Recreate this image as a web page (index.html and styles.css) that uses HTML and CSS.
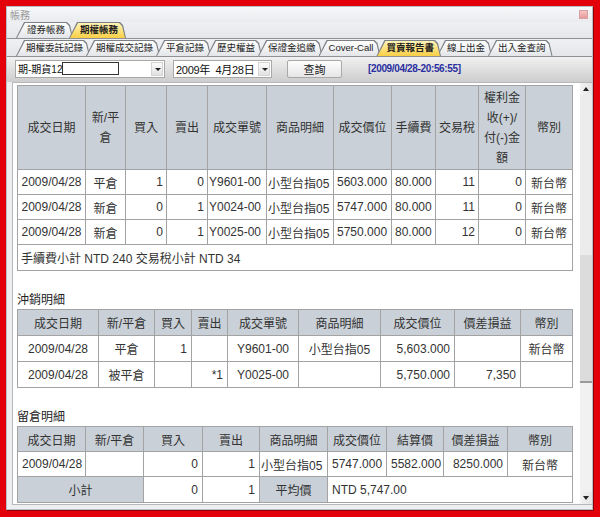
FILE: index.html
```html
<!DOCTYPE html>
<html>
<head>
<meta charset="utf-8">
<link rel="stylesheet" href="styles.css">
</head>
<body>
<div class="window">
  <div class="titlebar">
    <span class="title">帳務</span>
    <span class="close"></span>
  </div>
  <div class="tabs tabs1">
    <span class="tab">證券帳務</span>
    <span class="tab active">期權帳務</span>
  </div>
  <div class="tabs tabs2">
    <span class="tab">期權委託記錄</span>
    <span class="tab">期權成交記錄</span>
    <span class="tab">平倉記錄</span>
    <span class="tab">歷史權益</span>
    <span class="tab">保證金追繳</span>
    <span class="tab">Cover-Call</span>
    <span class="tab active">買賣報告書</span>
    <span class="tab">線上出金</span>
    <span class="tab">出入金查詢</span>
  </div>
  <div class="controls">
    <div class="select sel-acct">
      <span class="sel-text">期-期貨12</span>
      <span class="blank"></span>
      <span class="arrow"></span>
    </div>
    <div class="select sel-date">
      <span class="sel-text">2009年&nbsp;&nbsp;4月28日</span>
      <span class="arrow"></span>
    </div>
    <button class="btn">查詢</button>
    <span class="stamp">[2009/04/28-20:56:55]</span>
  </div>
  <div class="content">
    <div class="pane">
      <table class="t t1">
        <colgroup>
          <col style="width:68px"><col style="width:40px"><col style="width:41px"><col style="width:41px"><col style="width:59px"><col style="width:67px"><col style="width:58px"><col style="width:44px"><col style="width:43px"><col style="width:47px"><col style="width:47px">
        </colgroup>
        <tr class="head">
          <th>成交日期</th><th>新/平<br>倉</th><th>買入</th><th>賣出</th><th>成交單號</th><th>商品明細</th><th>成交價位</th><th>手續費</th><th>交易稅</th><th>權利金<br>收(+)/<br>付(-)金<br>額</th><th>幣別</th>
        </tr>
        <tr>
          <td class="c">2009/04/28</td><td class="c">平倉</td><td class="r">1</td><td class="r">0</td><td class="n">Y9601-00</td><td class="n">小型台指05</td><td>5603.000</td><td>80.000</td><td class="r">11</td><td class="r">0</td><td class="c">新台幣</td>
        </tr>
        <tr>
          <td class="c">2009/04/28</td><td class="c">新倉</td><td class="r">0</td><td class="r">1</td><td class="n">Y0024-00</td><td class="n">小型台指05</td><td>5747.000</td><td>80.000</td><td class="r">11</td><td class="r">0</td><td class="c">新台幣</td>
        </tr>
        <tr>
          <td class="c">2009/04/28</td><td class="c">新倉</td><td class="r">0</td><td class="r">1</td><td class="n">Y0025-00</td><td class="n">小型台指05</td><td>5750.000</td><td>80.000</td><td class="r">12</td><td class="r">0</td><td class="c">新台幣</td>
        </tr>
        <tr class="sum">
          <td colspan="11">手續費小計 NTD 240 交易稅小計 NTD 34</td>
        </tr>
      </table>

      <div class="section">沖銷明細</div>
      <table class="t t2">
        <colgroup>
          <col style="width:81px"><col style="width:56px"><col style="width:37px"><col style="width:36px"><col style="width:71px"><col style="width:82px"><col style="width:74px"><col style="width:66px"><col style="width:52px">
        </colgroup>
        <tr class="head">
          <th>成交日期</th><th>新/平倉</th><th>買入</th><th>賣出</th><th>成交單號</th><th>商品明細</th><th>成交價位</th><th>價差損益</th><th>幣別</th>
        </tr>
        <tr>
          <td class="c">2009/04/28</td><td class="c">平倉</td><td class="r">1</td><td></td><td class="c">Y9601-00</td><td class="c">小型台指05</td><td class="r">5,603.000</td><td></td><td class="c">新台幣</td>
        </tr>
        <tr>
          <td class="c">2009/04/28</td><td class="c">被平倉</td><td></td><td class="r">*1</td><td class="c">Y0025-00</td><td></td><td class="r">5,750.000</td><td class="r">7,350</td><td></td>
        </tr>
      </table>

      <div class="section">留倉明細</div>
      <table class="t t3">
        <colgroup>
          <col style="width:68px"><col style="width:58px"><col style="width:59px"><col style="width:57px"><col style="width:68px"><col style="width:59px"><col style="width:57px"><col style="width:64px"><col style="width:65px">
        </colgroup>
        <tr class="head">
          <th>成交日期</th><th>新/平倉</th><th>買入</th><th>賣出</th><th>商品明細</th><th>成交價位</th><th>結算價</th><th>價差損益</th><th>幣別</th>
        </tr>
        <tr>
          <td>2009/04/28</td><td></td><td class="r">0</td><td class="r">1</td><td class="n">小型台指05</td><td>5747.000</td><td>5582.000</td><td class="r">8250.000</td><td class="c">新台幣</td>
        </tr>
        <tr>
          <th colspan="2">小計</th><td class="r">0</td><td class="r">1</td><th>平均價</th><td colspan="4">NTD 5,747.00</td>
        </tr>
      </table>
    </div>
    <div class="scrollbar">
      <span class="sb-btn sb-up"></span>
      <span class="sb-track sb-top"></span>
      <span class="sb-thumb"></span>
      <span class="sb-track sb-bottom"></span>
      <span class="sb-btn sb-down"></span>
    </div>
  </div>
</div>
</body>
</html>
```

FILE: styles.css
```css
* { box-sizing: border-box; }

html, body {
  margin: 0;
  height: 100%;
}

body {
  background: #e3000b;
  padding: 6px 7px 7px 6px;
  font-family: "Liberation Sans", "Noto Sans CJK TC", sans-serif;
  color: #333;
}

.window {
  height: 504px;
  background: #eceef0;
  border: 1px solid #b9bcc2;
  display: flex;
  flex-direction: column;
  box-shadow: 1px 1px 0 #8a0006;
}

.titlebar {
  height: 15px;
  display: flex;
  align-items: center;
  justify-content: space-between;
  padding: 0 3px 0 3px;
  background: linear-gradient(#f7f8fa, #e9ebee);
}

.title {
  font-size: 10px;
  color: #9a9a9a;
}

.close {
  width: 9px;
  height: 9px;
  background: linear-gradient(#f6c4c4, #e79a9a);
  border: 1px solid #d8a0a0;
  margin-right: 1px;
}

.tabs {
  display: flex;
  align-items: flex-end;
  height: 17px;
  border-bottom: 1px solid #8e9196;
  background: linear-gradient(#eef0f3, #e4e6ea);
}

.tabs1 { padding-left: 9px; }
.tabs2 { padding-left: 9px; margin-top: 1px; }

.tab {
  position: relative;
  z-index: 0;
  height: 16px;
  line-height: 16px;
  font-size: 9.5px;
  color: #222;
  padding: 0 7px 0 10px;
  margin-right: -4px;
  white-space: nowrap;
}

.tab::before,
.tab::after {
  content: "";
  position: absolute;
  z-index: -1;
  clip-path: polygon(0 100%, 8px 0, calc(100% - 6px) 0, calc(100% - 3px) 3px, 100% 100%);
}

.tab::before {
  inset: 0;
  background: #7d8084;
}

.tab::after {
  inset: 1px 1px 0 1px;
  background: linear-gradient(#ffffff, #e3e5e8);
}

.tab.active {
  font-weight: bold;
  z-index: 1;
}

.tab.active::after {
  background: linear-gradient(#fff4b8, #f9cf45);
}

.tabs1 .tab { padding: 0 8px 0 11px; }

.controls {
  height: 25px;
  display: flex;
  align-items: center;
  padding: 0 0 2px 8px;
  background: linear-gradient(#f1f1f1, #cdcdcd);
}

.select {
  height: 18px;
  display: flex;
  align-items: center;
  background: #fff;
  border: 1px solid #a8a8a8;
  font-size: 11px;
  color: #111;
}

.sel-acct { width: 150px; font-size: 10px; }
.sel-date { width: 99px; margin-left: 8px; }

.sel-text {
  padding-left: 2px;
  white-space: nowrap;
}

.sel-date .sel-text { flex: 1; letter-spacing: -0.3px; }

.blank {
  width: 57px;
  height: 13px;
  border: 1px solid #333;
  background: #fff;
  margin-left: 0;
}

.sel-acct .blank { margin-right: auto; }

.arrow {
  width: 12px;
  height: 14px;
  margin-right: 1px;
  background: linear-gradient(#fbfbfb, #e2e2e2);
  border: 1px solid #d4d4d4;
  position: relative;
}

.arrow::after {
  content: "";
  position: absolute;
  left: 3px;
  top: 5px;
  border-left: 3px solid transparent;
  border-right: 3px solid transparent;
  border-top: 3px solid #222;
}

.btn {
  margin-left: 15px;
  width: 55px;
  height: 18px;
  padding: 0;
  font-family: inherit;
  font-size: 11px;
  color: #222;
  background: linear-gradient(#fefefe, #e6e6e6);
  border: 1px solid #a9a9a9;
  border-radius: 2px;
}

.stamp {
  margin-left: 26px;
  font-size: 10px;
  font-weight: bold;
  color: #2a2fa0;
  letter-spacing: -0.35px;
}

.content {
  flex: 1;
  display: flex;
  margin: 0 0 4px 5px;
  border: 1px solid #b6b8bc;
  border-right: 0;
  background: #fff;
  min-height: 0;
}

.pane {
  flex: 1;
  padding: 2px 0 0 4px;
  overflow: hidden;
}

.t {
  width: 555px;
  table-layout: fixed;
  border-collapse: collapse;
  font-size: 12px;
  color: #333;
}

.t th,
.t td {
  border: 1px solid #a3a3a3;
  padding: 0 4px;
  white-space: nowrap;
  overflow: hidden;
  font-weight: normal;
}

.t th {
  background: #c9d0d7;
  text-align: center;
}

.t td { text-align: left; }
.t td.c { text-align: center; }
.t td.r { text-align: right; }

.t1 .head { height: 84px; }
.t1 .head th { line-height: 20px; padding: 0; }
.t1 tr { height: 25px; }
.t1 .sum { height: 26px; }
.t1 .sum td { padding-left: 3px; }

.t1 td { padding: 0 3px; }
.t td.n { padding: 0 1px; }

.t2 tr { height: 26px; }
.t3 tr { height: 25px; }
.t3 tr:last-child { height: 26px; }

.section {
  margin-top: 21px;
  height: 17px;
  line-height: 17px;
  font-size: 12px;
  color: #222;
}

.scrollbar {
  width: 13px;
  display: flex;
  flex-direction: column;
  background: #f3f3f3;
  border-left: 1px solid #ffffff;
}

.sb-btn {
  height: 12px;
  position: relative;
  background: linear-gradient(90deg, #f2f2f2, #e6e6e6);
}

.sb-btn::after {
  content: "";
  position: absolute;
  left: 3px;
  border-left: 3px solid transparent;
  border-right: 3px solid transparent;
}

.sb-up::after { top: 4px; border-bottom: 4px solid #222; }
.sb-down::after { top: 4px; border-top: 4px solid #222; }

.sb-top { flex: 0 0 160px; background: #e6e6e6; }
.sb-thumb { flex: 0 0 128px; background: #dcdcdc; border-bottom: 2px solid #9a9a9a; }
.sb-track { background: #ececec; }
.sb-bottom { flex: 1; background: #f1f1f1; }
```
